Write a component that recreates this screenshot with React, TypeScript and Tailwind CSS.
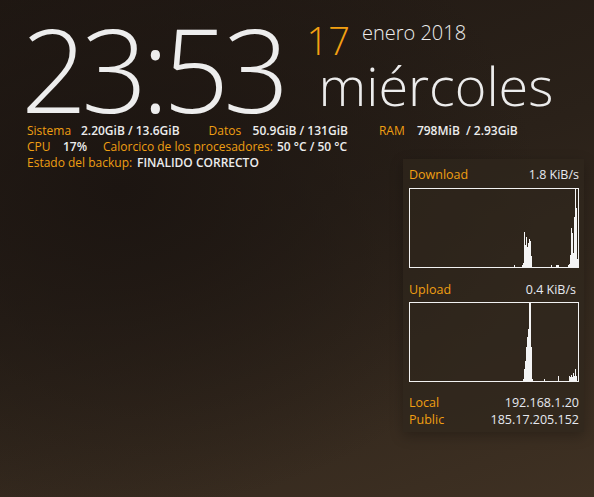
const downloadBars: [number, number][] = [
  [104, 2], [112, 2], [113, 4], [114, 35], [115, 22], [116, 30], [117, 20], [118, 24], [119, 28], [120, 26], [121, 11],
  [141, 2], [146, 2], [147, 2], [148, 2],
  [158, 2], [159, 3], [160, 12], [161, 39], [162, 34], [163, 14], [164, 50], [165, 78], [166, 59], [167, 8],
];

const uploadBars: [number, number][] = [
  [113, 2], [114, 12], [115, 20], [116, 34], [117, 44], [118, 52], [119, 78], [120, 78], [121, 34], [122, 2],
  [134, 2], [148, 5], [159, 5], [160, 4], [161, 6], [162, 4], [163, 8], [164, 5], [165, 12], [166, 5],
];

function Graph({ bars }: { bars: [number, number][] }) {
  return (
    <div className="h-[80px] w-[170px] border border-[#f2f2f2]">
      <svg width="168" height="78" viewBox="0 0 168 78" className="block">
        {bars.map(([x, h]) => (
          <rect key={x} x={x} y={78 - h} width="1" height={h} fill="#f4f4f4" />
        ))}
      </svg>
    </div>
  );
}

function Stat({ label, value, w }: { label: string; value: string; w: string }) {
  return (
    <>
      <span className={`shrink-0 text-[#ef9f12] ${w}`}>{label}</span>
      <span className="shrink-0 font-semibold text-[#ececec]">{value}</span>
    </>
  );
}

export default function App() {
  return (
    <div
      className="relative h-[497px] w-[594px] overflow-hidden bg-[#271e17] text-[12px]"
      style={{
        fontFamily: '"Open Sans", "Noto Sans", sans-serif',
        backgroundImage:
          'radial-gradient(ellipse 420px 320px at 120px 190px, #1c1511 0%, rgba(28,21,17,0) 100%), linear-gradient(160deg, #201813 0%, #2a2119 45%, #3f3123 100%)',
      }}
    >
      {/* Clock */}
      <div className="flex items-start pl-[21px] pt-[18px]">
        <div className="text-[116px] font-light leading-[100px] tracking-[-6px] text-[#ededed]">23:53</div>
        <div className="ml-[23px] flex flex-col">
          <div className="flex items-start">
            <span className="mt-[3px] text-[38px] font-light leading-none text-[#f3a012]">17</span>
            <span className="ml-[12px] mt-[5px] text-[20px] font-light leading-none text-[#ececec]">enero 2018</span>
          </div>
          <div className="-mt-[1px] ml-[12px] text-[54px] font-light leading-none text-[#ececec]">miércoles</div>
        </div>
      </div>

      {/* System stats */}
      <div className="mt-[5px] flex flex-col pl-[27px] leading-[16px]">
        <div className="flex">
          <Stat label="Sistema" value="2.20GiB / 13.6GiB" w="w-[54px]" />
          <span className="w-[29px] shrink-0" />
          <Stat label="Datos" value="50.9GiB / 131GiB" w="w-[44px]" />
          <span className="w-[31px] shrink-0" />
          <Stat label="RAM" value={'798MiB\u00a0 / 2.93GiB'} w="w-[38px]" />
        </div>
        <div className="flex">
          <span className="w-[36px] shrink-0 text-[#ef9f12]">CPU</span>
          <span className="w-[40px] shrink-0 font-semibold text-[#ececec]">17%</span>
          <Stat label="Calorcico de los procesadores:" value="50 °C / 50 °C" w="w-[174px]" />
        </div>
        <div className="flex">
          <Stat label="Estado del backup:" value="FINALIDO CORRECTO" w="w-[110px]" />
        </div>
      </div>

      {/* Network panel */}
      <div className="ml-auto mr-[10px] -mt-[12px] flex w-[181px] flex-col bg-[#2f261d]/70 pb-[4px] pl-[6px] pr-[5px] pt-[8px] text-[12.5px] shadow-[0_4px_12px_rgba(0,0,0,0.25)]">
        <div className="flex justify-between leading-[16px]">
          <span className="text-[#ef9f12]">Download</span>
          <span className="text-[#e6e9f0]">1.8 KiB/s</span>
        </div>
        <div className="mt-[5px]">
          <Graph bars={downloadBars} />
        </div>
        <div className="mt-[14px] flex justify-between leading-[16px]">
          <span className="text-[#ef9f12]">Upload</span>
          <span className="pr-[3px] text-[#e6e9f0]">0.4 KiB/s</span>
        </div>
        <div className="mt-[4px]">
          <Graph bars={uploadBars} />
        </div>
        <div className="mt-[12px] flex justify-between leading-[17px]">
          <span className="text-[#ef9f12]">Local</span>
          <span className="text-[#e6e9f0]">192.168.1.20</span>
        </div>
        <div className="flex justify-between leading-[17px]">
          <span className="text-[#ef9f12]">Public</span>
          <span className="text-[#e6e9f0]">185.17.205.152</span>
        </div>
      </div>
    </div>
  );
}
